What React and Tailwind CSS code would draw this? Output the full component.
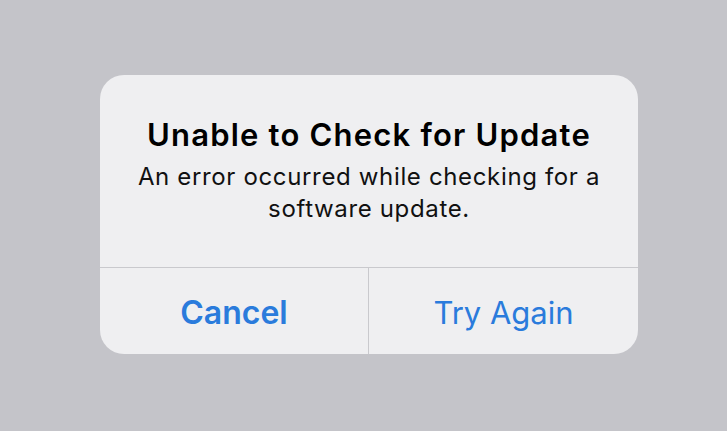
import React from 'react';

function App() {
  return (
    <div className="w-[727px] h-[431px] bg-[#c4c4c9] pt-[75px] pl-[100px]" style={{ fontFamily: 'Inter, "Noto Sans", sans-serif' }}>
      <div className="w-[538px] h-[279px] rounded-[24px] bg-[#efeff1] flex flex-col overflow-hidden">
        {/* message */}
        <div className="h-[192px] flex flex-col items-center pt-[41px] text-center">
          <h1 className="text-[31px] leading-[38px] font-semibold text-black tracking-[1.2px]">Unable to Check for Update</h1>
          <p className="mt-[7px] text-[24px] leading-[32px] text-[#111] tracking-[0.65px] w-[500px]">
            An error occurred while checking for a software update.
          </p>
        </div>
        {/* buttons */}
        <div className="flex-1 flex border-t border-[#c9c9cd]">
          <button className="w-[269px] flex items-center justify-center pt-[4px] text-[32px] font-semibold text-[#2a7bdc] border-r border-[#c9c9cd]">
            Cancel
          </button>
          <button className="flex-1 flex items-center justify-center pt-[4px] text-[31px] text-[#2a7bdc]">
            Try Again
          </button>
        </div>
      </div>
    </div>
  );
}

export default App;
